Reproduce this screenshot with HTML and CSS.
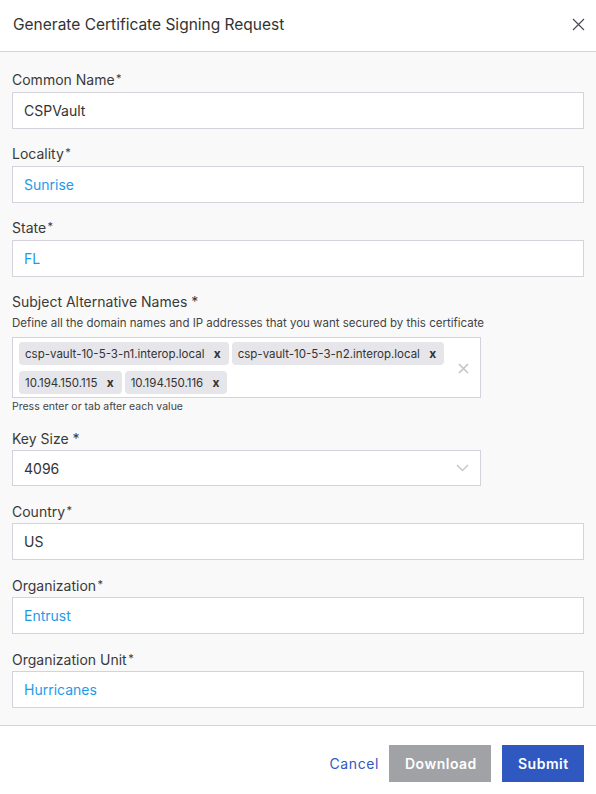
FILE: index.html
```html
<!DOCTYPE html>
<html lang="en">
<head>
    <meta charset="UTF-8">
    <meta name="viewport" content="width=device-width, initial-scale=1.0">
    <title>Generate Certificate Signing Request</title>
    <link rel="stylesheet" href="styles.css">
</head>
<body>
    <div class="modal">
        <div class="modal-header">
            <h1>Generate Certificate Signing Request</h1>
            <span class="close">
                <svg width="13" height="13" viewBox="0 0 13 13"><path d="M1 1L12 12M12 1L1 12" stroke="#4a4d55" stroke-width="1.2" fill="none"/></svg>
            </span>
        </div>

        <div class="modal-body">
            <div class="form-group">
                <label>Common Name<span class="req">*</span></label>
                <div class="input">CSPVault</div>
            </div>

            <div class="form-group">
                <label>Locality<span class="req">*</span></label>
                <div class="input filled">Sunrise</div>
            </div>

            <div class="form-group">
                <label>State<span class="req">*</span></label>
                <div class="input filled">FL</div>
            </div>

            <div class="form-group">
                <label>Subject Alternative Names *</label>
                <div class="help">Define all the domain names and IP addresses that you want secured by this certificate</div>
                <div class="tag-box">
                    <div class="tags">
                        <span class="tag">csp-vault-10-5-3-n1.interop.local <b>x</b></span>
                        <span class="tag">csp-vault-10-5-3-n2.interop.local <b>x</b></span>
                        <span class="tag">10.194.150.115 <b>x</b></span>
                        <span class="tag">10.194.150.116 <b>x</b></span>
                    </div>
                    <span class="clear">
                        <svg width="11" height="11" viewBox="0 0 11 11"><path d="M1 1L10 10M10 1L1 10" stroke="#c4c4c8" stroke-width="1.6" fill="none"/></svg>
                    </span>
                </div>
                <div class="hint">Press enter or tab after each value</div>
            </div>

            <div class="form-group">
                <label>Key Size *</label>
                <div class="input select">
                    <span>4096</span>
                    <svg width="13" height="8" viewBox="0 0 13 8"><path d="M1 1L6.5 6.5L12 1" stroke="#c8c8cc" stroke-width="1.5" fill="none"/></svg>
                </div>
            </div>

            <div class="form-group">
                <label>Country<span class="req">*</span></label>
                <div class="input">US</div>
            </div>

            <div class="form-group">
                <label>Organization<span class="req">*</span></label>
                <div class="input filled">Entrust</div>
            </div>

            <div class="form-group">
                <label>Organization Unit<span class="req">*</span></label>
                <div class="input filled">Hurricanes</div>
            </div>
        </div>

        <div class="modal-footer">
            <a class="cancel">Cancel</a>
            <button class="btn btn-disabled">Download</button>
            <button class="btn btn-primary">Submit</button>
        </div>
    </div>
</body>
</html>
```

FILE: styles.css
```css
body {
    margin: 0;
    font-family: Inter, "Noto Sans", sans-serif;
    color: #333;
    background-color: white;
}
.modal {
    width: 596px;
    height: 794px;
    display: flex;
    flex-direction: column;
}
.modal-header {
    height: 52px;
    flex-shrink: 0;
    display: flex;
    align-items: center;
    justify-content: space-between;
    padding: 0 13px 2px 13px;
    border-bottom: 1px solid #d4d3dc;
    box-sizing: border-box;
}
.modal-header h1 {
    font-size: 15.5px;
    font-weight: 400;
    margin: 0;
    color: #333;
}
.close {
    display: flex;
    margin-right: -2px;
}
.modal-body {
    background-color: #f9f9f9;
    padding: 18px 12px 0 12px;
    height: 674px;
    flex-shrink: 0;
    box-sizing: border-box;
    border-bottom: 1px solid #d4d3dc;
}
.form-group {
    margin-bottom: 15.5px;
}
label {
    display: block;
    height: 20px;
    font-size: 14px;
    line-height: 20px;
    margin-bottom: 1.5px;
    color: #3a3a3a;
}
.req {
    font-size: 11px;
    line-height: 0;
    margin-left: 1.5px;
    vertical-align: 3px;
}
.input {
    height: 37px;
    box-sizing: border-box;
    border: 1px solid #d4d3dc;
    background-color: white;
    padding: 0 11px;
    display: flex;
    align-items: center;
    font-size: 14px;
    color: #333;
}
.input.filled {
    color: #1e9be8;
}
.input.select {
    width: 469px;
    height: 36px;
    justify-content: space-between;
    padding-right: 11px;
}
.help {
    font-size: 11.5px;
    line-height: 14px;
    margin-top: 4px;
    color: #444;
    margin-bottom: 7px;
}
.tag-box {
    width: 469px;
    height: 61px;
    box-sizing: border-box;
    border: 1px solid #d4d3dc;
    background-color: white;
    display: flex;
    align-items: center;
    padding: 0 11px 0 6px;
}
.tags {
    flex: 1;
    display: flex;
    flex-wrap: wrap;
    gap: 6px 3px;
}
.tag {
    background-color: #e6e6ea;
    border-radius: 4px;
    font-size: 11.5px;
    height: 23px;
    line-height: 23px;
    padding: 0 8px 0 6px;
    color: #333;
}
.tag b {
    margin-left: 6px;
    font-size: 12px;
}
.hint {
    font-size: 10.5px;
    line-height: 12px;
    color: #444;
    margin-top: 3px;
}
.modal-footer {
    flex: 1;
    display: flex;
    align-items: flex-start;
    justify-content: flex-end;
    padding: 19px 12px 0 0;
    gap: 11px;
}
.cancel {
    color: #3358c0;
    font-size: 14px;
    line-height: 37px;
    letter-spacing: 0.6px;
    margin-right: -1px;
}
.btn {
    border: none;
    height: 37px;
    font-family: Inter, "Noto Sans", sans-serif;
    font-size: 14px;
    font-weight: 600;
    letter-spacing: 0.5px;
    color: white;
    padding: 0 16px;
}
.btn-disabled {
    background-color: #a0a2a5;
    width: 102px;
}
.btn-primary {
    background-color: #2f59c0;
    width: 82px;
}
```
